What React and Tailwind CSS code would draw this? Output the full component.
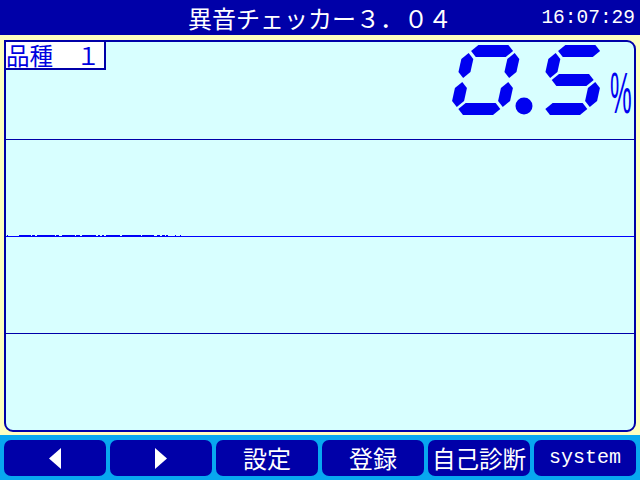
import React from "react";

const K = 0.22;

function segments(W, H, t, g) {
  const L = t / 2, R = W - t / 2, T = t / 2, M = H / 2, B = H - t / 2;
  const h = (xa, xb, y) => [
    [xa + g, y], [xa + g + t / 2, y - t / 2], [xb - g - t / 2, y - t / 2],
    [xb - g, y], [xb - g - t / 2, y + t / 2], [xa + g + t / 2, y + t / 2],
  ];
  const v = (x, ya, yb) => [
    [x, ya + g], [x + t / 2, ya + g + t / 2], [x + t / 2, yb - g - t / 2],
    [x, yb - g], [x - t / 2, yb - g - t / 2], [x - t / 2, ya + g + t / 2],
  ];
  return {
    a: h(L, R, T), b: v(R, T, M), c: v(R, M, B), d: h(L, R, B),
    e: v(L, M, B), f: v(L, T, M), g: h(L, R, M),
  };
}

function Digit({ ox, oy, on }) {
  const W = 58, H = 70;
  const segs = segments(W, H, 12, 2);
  return (
    <g>
      {on.split("").map((s) => (
        <polygon
          key={s}
          fill="#0000F0"
          points={segs[s]
            .map(([x, y]) => `${(ox + x + (H - y) * K).toFixed(2)},${(oy + y).toFixed(2)}`)
            .join(" ")}
        />
      ))}
    </g>
  );
}

function BigValue() {
  return (
    <div className="flex items-start pr-[2px]">
      <svg width="160" height="76" viewBox="0 0 160 76" className="mt-[2px]">
        <Digit ox={-1} oy={1} on="abcdef" />
        <circle cx="74" cy="62" r="8.5" fill="#0000F0" />
        <Digit ox={86} oy={1} on="afgcd" />
      </svg>
      <div className="w-[22px] mt-[22px]">
        <span
          className="inline-block origin-left scale-x-[0.42] text-[58px] leading-none text-[#0000F0]"
          style={{ fontFamily: '"Liberation Sans", sans-serif' }}
        >
          %
        </span>
      </div>
    </div>
  );
}

function Trace() {
  const runs = [
    [1, 1], [13, 12], [26, 3], [31, 18], [50, 3], [56, 13], [70, 4], [76, 14],
    [92, 2], [96, 2], [100, 14], [116, 19], [136, 12], [151, 3], [156, 3], [160, 2], [169, 1], [174, 1],
  ];
  return (
    <svg width="200" height="1" className="block">
      {runs.map(([x, w], i) => (
        <rect key={i} x={x} y="0" width={w} height="1" fill="#0000F0" />
      ))}
    </svg>
  );
}

const jp = { fontFamily: '"Noto Sans CJK JP", "Noto Sans", sans-serif' };
const mono = { fontFamily: '"Liberation Mono", "DejaVu Sans Mono", monospace' };

function Btn({ children }) {
  return (
    <div className="h-[36px] rounded-[7px] bg-[#0000A8] flex items-center justify-center text-white">
      {children}
    </div>
  );
}

export default function App() {
  return (
    <div className="w-[640px] h-[480px] flex flex-col bg-[#FFFFC0] overflow-hidden">
      <header className="h-[35px] bg-[#0000A8] grid grid-cols-[1fr_auto_1fr] items-center text-white">
        <div />
        <div className="text-[24px] leading-[30px] whitespace-nowrap" style={jp}>
          異音チェッカー３．０４
        </div>
        <div className="justify-self-end pr-[5px] text-[19.5px] leading-[24px]" style={mono}>
          16:07:29
        </div>
      </header>

      <main className="flex-1 px-1 pt-[5px] pb-[3px] flex">
        <div className="flex-1 flex flex-col border-2 border-[#0000A8] rounded-[9px] rounded-tl-none bg-[#D8FFFF] overflow-hidden">
          <div className="h-[97px] flex justify-between items-start">
            <div className="w-[100px] h-[28px] bg-white border-r-2 border-b-2 border-[#0000A8] text-[#0000E0] flex items-center">
              <span className="text-[23.5px] leading-[24px] whitespace-nowrap" style={jp}>
                品種　１
              </span>
            </div>
            <BigValue />
          </div>
          <div className="h-px bg-[#0000A8]" />
          <div className="h-[96px] flex flex-col justify-end">
            <Trace />
          </div>
          <div className="h-px bg-[#0000FF]" />
          <div className="h-[96px]" />
          <div className="h-px bg-[#0000A8]" />
          <div className="flex-1" />
        </div>
      </main>

      <footer className="h-[45px] bg-[#08A8F0] grid grid-cols-6 gap-1 px-1 pt-[5px]">
        <Btn>
          <svg width="12" height="21" viewBox="0 0 12 21">
            <polygon points="12,0 12,21 0,10.5" fill="white" />
          </svg>
        </Btn>
        <Btn>
          <svg width="12" height="21" viewBox="0 0 12 21">
            <polygon points="0,0 0,21 12,10.5" fill="white" />
          </svg>
        </Btn>
        <Btn>
          <span className="text-[24px] leading-[28px]" style={jp}>設定</span>
        </Btn>
        <Btn>
          <span className="text-[24px] leading-[28px]" style={jp}>登録</span>
        </Btn>
        <Btn>
          <span className="text-[23.5px] leading-[28px] whitespace-nowrap" style={jp}>自己診断</span>
        </Btn>
        <Btn>
          <span className="text-[20px] leading-[24px]" style={mono}>system</span>
        </Btn>
      </footer>
    </div>
  );
}
